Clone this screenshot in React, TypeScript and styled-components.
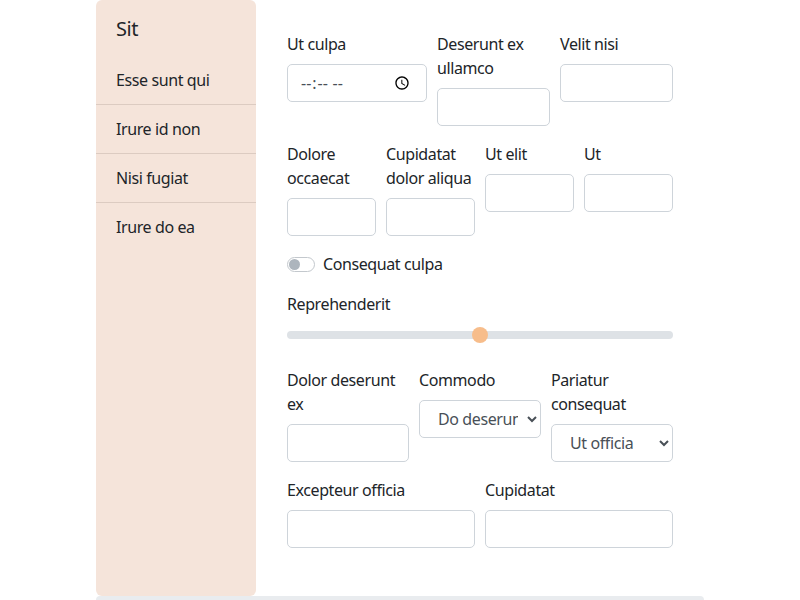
import React from "react";
import styled, { createGlobalStyle } from "styled-components";

const GlobalStyle = createGlobalStyle`
  html, body { margin: 0; padding: 0; background: #ffffff; }
  body {
    font-family: "Noto Sans", "Open Sans", sans-serif;
    font-size: 16px;
    line-height: 24px;
    letter-spacing: -0.4px;
    color: #212529;
    overflow: hidden;
  }
  * { box-sizing: border-box; }
`;

const Page = styled.div`
  width: 608px;
  margin: 0 auto;
`;

const Layout = styled.div`
  display: flex;
  align-items: stretch;
`;

const Sidebar = styled.nav`
  width: 160px;
  flex: none;
  background: #f5e4da;
  border-radius: 6px;
  padding-top: 17px;
`;

const SidebarTitle = styled.div`
  font-size: 20px;
  line-height: 24px;
  padding: 0 20px;
  margin-bottom: 15px;
`;

const NavList = styled.ul`
  list-style: none;
  margin: 0;
  padding: 0;
`;

const NavItem = styled.li`
  padding: 12px 20px;
  line-height: 24px;
  font-size: 16px;
  border-bottom: 1px solid #dccbc1;
  &:last-child { border-bottom: none; }
`;

const Content = styled.form`
  flex: 1;
  padding: 32px 31px 48px 31px;
  display: flex;
  flex-direction: column;
`;

const Row = styled.div<{ $cols: string; $mb?: number }>`
  display: grid;
  grid-template-columns: ${(p) => p.$cols};
  column-gap: 10px;
  align-items: start;
  margin-bottom: ${(p) => (p.$mb ?? 16)}px;
`;

const Field = styled.div`
  display: flex;
  flex-direction: column;
  min-width: 0;
`;

const Label = styled.label`
  display: block;
  line-height: 24px;
  margin-bottom: 8px;
`;

const Input = styled.input`
  display: block;
  width: 100%;
  height: 38px;
  padding: 6px 12px;
  font-family: inherit;
  font-size: 16px;
  color: #495057;
  background: #fff;
  border: 1px solid #ced4da;
  border-radius: 5px;
  outline: none;
`;

const Select = styled.select`
  display: block;
  width: 100%;
  height: 38px;
  padding: 6px 6px 6px 14px;
  font-family: inherit;
  font-size: 16px;
  letter-spacing: -0.4px;
  color: #495057;
  background: #fff;
  border: 1px solid #ced4da;
  border-radius: 5px;
  outline: none;
`;

const SwitchRow = styled.div`
  display: flex;
  align-items: center;
  gap: 8px;
  height: 24px;
  margin-bottom: 16px;
`;

const SwitchTrack = styled.span`
  position: relative;
  width: 28px;
  height: 15px;
  border: 1px solid #c3c8cd;
  border-radius: 8px;
  background: #fff;
  flex: none;
`;

const SwitchKnob = styled.span`
  position: absolute;
  left: 1px;
  top: 1px;
  width: 11px;
  height: 11px;
  border-radius: 50%;
  background: #adb5bd;
`;

const RangeField = styled.div`
  display: flex;
  flex-direction: column;
  margin-bottom: 22px;
`;

const RangeLabel = styled.label`
  display: block;
  line-height: 24px;
  margin-bottom: 7px;
`;

const Range = styled.input`
  -webkit-appearance: none;
  appearance: none;
  width: 100%;
  height: 23px;
  margin: 0;
  padding: 0;
  background: transparent;
  outline: none;
  &::-webkit-slider-runnable-track {
    height: 8px;
    border-radius: 4px;
    background: #dee2e6;
  }
  &::-webkit-slider-thumb {
    -webkit-appearance: none;
    appearance: none;
    width: 16px;
    height: 16px;
    border-radius: 50%;
    background: #f7bd8b;
    border: none;
    margin-top: -4px;
  }
`;

const FooterBar = styled.div`
  height: 4px;
  background: #e9ecef;
  border-radius: 4px 4px 0 0;
`;

export default function App() {
  return (
    <>
      <GlobalStyle />
      <Page>
        <Layout>
          <Sidebar>
            <SidebarTitle>Sit</SidebarTitle>
            <NavList>
              <NavItem>Esse sunt qui</NavItem>
              <NavItem>Irure id non</NavItem>
              <NavItem>Nisi fugiat</NavItem>
              <NavItem>Irure do ea</NavItem>
            </NavList>
          </Sidebar>
          <Content onSubmit={(e) => e.preventDefault()}>
            <Row $cols="140px 1fr 1fr">
              <Field>
                <Label>Ut culpa</Label>
                <Input type="time" />
              </Field>
              <Field>
                <Label>Deserunt ex ullamco</Label>
                <Input type="text" />
              </Field>
              <Field>
                <Label>Velit nisi</Label>
                <Input type="text" />
              </Field>
            </Row>
            <Row $cols="1fr 1fr 1fr 1fr">
              <Field>
                <Label>Dolore occaecat</Label>
                <Input type="text" />
              </Field>
              <Field>
                <Label>Cupidatat dolor aliqua</Label>
                <Input type="text" />
              </Field>
              <Field>
                <Label>Ut elit</Label>
                <Input type="text" />
              </Field>
              <Field>
                <Label>Ut</Label>
                <Input type="text" />
              </Field>
            </Row>
            <SwitchRow>
              <SwitchTrack>
                <SwitchKnob />
              </SwitchTrack>
              <span>Consequat culpa</span>
            </SwitchRow>
            <RangeField>
              <RangeLabel>Reprehenderit</RangeLabel>
              <Range type="range" min={0} max={100} defaultValue={50} />
            </RangeField>
            <Row $cols="1fr 1fr 1fr">
              <Field>
                <Label>Dolor deserunt ex</Label>
                <Input type="text" />
              </Field>
              <Field>
                <Label>Commodo</Label>
                <Select defaultValue="a">
                  <option value="a">Do deserunt ex</option>
                  <option value="b">Ut officia</option>
                </Select>
              </Field>
              <Field>
                <Label>Pariatur consequat</Label>
                <Select defaultValue="b">
                  <option value="a">Do deserunt ex</option>
                  <option value="b">Ut officia</option>
                </Select>
              </Field>
            </Row>
            <Row $cols="1fr 1fr" $mb={0}>
              <Field>
                <Label>Excepteur officia</Label>
                <Input type="text" />
              </Field>
              <Field>
                <Label>Cupidatat</Label>
                <Input type="text" />
              </Field>
            </Row>
          </Content>
        </Layout>
        <FooterBar />
      </Page>
    </>
  );
}
